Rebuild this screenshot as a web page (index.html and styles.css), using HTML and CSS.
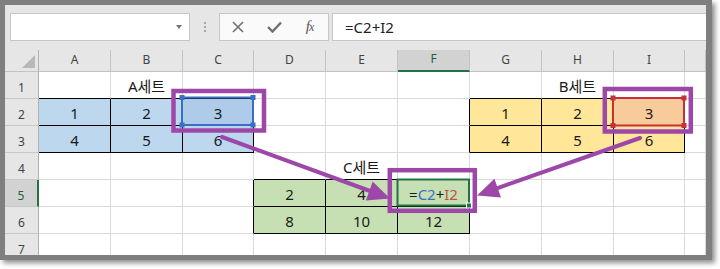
FILE: index.html
```html
<!DOCTYPE html>
<html>
<head>
    <title>Excel 셀 참조</title>
    <link rel="stylesheet" href="styles.css">
</head>
<body>
    <div class="shot">
        <div class="window">
            <div class="formula-bar">
                <div class="name-box"><span class="caret"></span></div>
                <div class="grip"><i></i><i></i><i></i></div>
                <div class="fx-buttons">
                    <span class="slot">
                        <svg width="12" height="12" viewBox="0 0 12 12"><path d="M1 1 L11 11 M11 1 L1 11" stroke="#707070" stroke-width="1.6" fill="none"/></svg>
                    </span>
                    <span class="slot">
                        <svg width="15" height="12" viewBox="0 0 15 12"><path d="M1 6 L5.5 10.5 L14 1.5" stroke="#707070" stroke-width="2.4" fill="none"/></svg>
                    </span>
                    <span class="slot fx">f<span class="fx-x">x</span></span>
                </div>
                <div class="formula-input">=C2+I2</div>
            </div>

            <div class="sheet">
                <!-- header row -->
                <div class="ch corner"><span></span></div>
                <div class="ch">A</div>
                <div class="ch">B</div>
                <div class="ch">C</div>
                <div class="ch">D</div>
                <div class="ch">E</div>
                <div class="ch sel">F</div>
                <div class="ch">G</div>
                <div class="ch">H</div>
                <div class="ch">I</div>
                <div class="ch"></div>

                <!-- row 1 -->
                <div class="rh">1</div>
                <div class="c bb"></div>
                <div class="c bb title">A세트</div>
                <div class="c bb"></div>
                <div class="c"></div>
                <div class="c"></div>
                <div class="c"></div>
                <div class="c bb"></div>
                <div class="c bb title">B세트</div>
                <div class="c bb"></div>
                <div class="c"></div>

                <!-- row 2 -->
                <div class="rh">2</div>
                <div class="c d blue">1</div>
                <div class="c d blue">2</div>
                <div class="c d blue-ref">3</div>
                <div class="c"></div>
                <div class="c"></div>
                <div class="c br"></div>
                <div class="c d yellow">1</div>
                <div class="c d yellow">2</div>
                <div class="c d orange-ref">3</div>
                <div class="c"></div>

                <!-- row 3 -->
                <div class="rh">3</div>
                <div class="c d blue">4</div>
                <div class="c d blue">5</div>
                <div class="c d blue">6</div>
                <div class="c"></div>
                <div class="c"></div>
                <div class="c br"></div>
                <div class="c d yellow">4</div>
                <div class="c d yellow">5</div>
                <div class="c d yellow">6</div>
                <div class="c"></div>

                <!-- row 4 -->
                <div class="rh">4</div>
                <div class="c"></div>
                <div class="c"></div>
                <div class="c"></div>
                <div class="c bb"></div>
                <div class="c bb title">C세트</div>
                <div class="c bb"></div>
                <div class="c"></div>
                <div class="c"></div>
                <div class="c"></div>
                <div class="c"></div>

                <!-- row 5 -->
                <div class="rh sel">5</div>
                <div class="c"></div>
                <div class="c"></div>
                <div class="c br"></div>
                <div class="c d green">2</div>
                <div class="c d green">4</div>
                <div class="c d green"><span>=<b class="ref-c">C2</b>+<b class="ref-i">I2</b></span></div>
                <div class="c"></div>
                <div class="c"></div>
                <div class="c"></div>
                <div class="c"></div>

                <!-- row 6 -->
                <div class="rh">6</div>
                <div class="c"></div>
                <div class="c"></div>
                <div class="c br"></div>
                <div class="c d green">8</div>
                <div class="c d green">10</div>
                <div class="c d green">12</div>
                <div class="c"></div>
                <div class="c"></div>
                <div class="c"></div>
                <div class="c"></div>

                <!-- row 7 -->
                <div class="rh">7</div>
                <div class="c"></div>
                <div class="c"></div>
                <div class="c"></div>
                <div class="c"></div>
                <div class="c"></div>
                <div class="c"></div>
                <div class="c"></div>
                <div class="c"></div>
                <div class="c"></div>
                <div class="c"></div>
            </div>
        </div>

        <!-- reference highlights and annotations drawn over the sheet -->
        <svg class="overlay" width="720" height="269" viewBox="0 0 720 269">
            <g fill="none" stroke-width="2">
                <rect x="182" y="97.5" width="71" height="27.5" stroke="#3b6fc6"/>
                <rect x="613" y="98" width="71" height="27.5" stroke="#c7303a"/>
                <rect x="397.5" y="179.5" width="71.5" height="26" stroke="#217346"/>
            </g>
            <g fill="#3b6fc6">
                <rect x="179.5" y="95" width="5" height="5"/>
                <rect x="250.5" y="95" width="5" height="5"/>
                <rect x="179.5" y="122.5" width="5" height="5"/>
                <rect x="250.5" y="122.5" width="5" height="5"/>
            </g>
            <g fill="#c7303a">
                <rect x="610.5" y="95.5" width="5" height="5"/>
                <rect x="681.5" y="95.5" width="5" height="5"/>
                <rect x="610.5" y="123" width="5" height="5"/>
                <rect x="681.5" y="123" width="5" height="5"/>
            </g>
            <rect x="466.5" y="203" width="5" height="5" fill="#217346" stroke="#fff" stroke-width="1"/>

            <g fill="none" stroke="#9d48a9" stroke-width="4.5">
                <rect x="173.5" y="91" width="90.5" height="39.5"/>
                <rect x="604.8" y="89" width="86" height="42.5"/>
                <rect x="389.8" y="170.2" width="85" height="40.6"/>
            </g>
            <g stroke="#9d48a9" stroke-width="4" stroke-linecap="round">
                <line x1="222" y1="137" x2="370" y2="191"/>
                <line x1="640" y1="138" x2="497" y2="188.3"/>
            </g>
            <g fill="#9d48a9">
                <polygon points="390,198.5 365.9,200.4 372.7,181.6"/>
                <polygon points="477,195.5 494.4,178.8 501,197.6"/>
            </g>
        </svg>
    </div>
</body>
</html>
```

FILE: styles.css
```css
body {
    margin: 0;
    background-color: #ffffff;
    font-family: "Noto Sans", "Noto Sans CJK KR", sans-serif;
}
.shot {
    position: relative;
    width: 720px;
    height: 269px;
    overflow: hidden;
}
.window {
    width: 701px;
    height: 250px;
    border-style: solid;
    border-color: #7f7f7f;
    border-width: 5px 6px 5px 5px;
    background-color: #e6e6e6;
    box-shadow: 3px 3px 5px rgba(0,0,0,0.45);
    overflow: hidden;
}

/* formula bar */
.formula-bar {
    height: 45px;
    box-sizing: border-box;
    padding-top: 8px;
    display: flex;
    align-items: flex-start;
}
.name-box {
    width: 180px;
    height: 28px;
    margin-left: 5px;
    box-sizing: border-box;
    background-color: #ffffff;
    border: 1px solid #c6c6c6;
    display: flex;
    align-items: center;
    justify-content: flex-end;
    padding-right: 7px;
}
.caret {
    width: 0;
    height: 0;
    border-left: 3.5px solid transparent;
    border-right: 3.5px solid transparent;
    border-top: 4px solid #777777;
}
.grip {
    width: 29px;
    height: 28px;
    display: flex;
    flex-direction: column;
    align-items: center;
    justify-content: center;
    gap: 2px;
    padding-left: 1px;
    box-sizing: border-box;
}
.grip i {
    width: 2px;
    height: 2px;
    background-color: #a6a6a6;
}
.fx-buttons {
    width: 110px;
    height: 28px;
    box-sizing: border-box;
    border: 1px solid #c6c6c6;
    background-color: #fafafa;
    display: flex;
}
.slot {
    width: 36px;
    display: flex;
    align-items: center;
    justify-content: center;
}
.fx {
    font-family: "Liberation Serif", serif;
    font-style: italic;
    font-size: 15px;
    color: #555555;
    padding-bottom: 2px;
}
.fx-x {
    font-size: 12px;
    margin-left: -1px;
    position: relative;
    top: 1px;
}
.formula-input {
    flex: 1;
    height: 28px;
    margin-left: 3px;
    box-sizing: border-box;
    border: 1px solid #c6c6c6;
    border-right: none;
    background-color: #ffffff;
    padding-left: 12px;
    font-size: 15px;
    line-height: 26px;
    color: #222222;
}

/* sheet grid */
.sheet {
    display: grid;
    grid-template-columns: 34px 72px 72px 71px 72px 72px 72px 72px 72px 71px 1fr;
    grid-template-rows: 22px repeat(7, 27px);
    background-color: #ffffff;
}
.sheet > div {
    box-sizing: border-box;
    display: flex;
    align-items: center;
    justify-content: center;
    border-right: 1px solid #d9d9d9;
    border-bottom: 1px solid #d9d9d9;
}
.sheet .ch {
    background-color: #e6e6e6;
    border-right: 1px solid #c3c3c3;
    border-bottom: 1px solid #c3c3c3;
    font-size: 12px;
    color: #444444;
    padding-bottom: 3px;
}
.sheet .ch.corner {
    justify-content: flex-end;
    align-items: flex-end;
    padding: 0 3px 3px 0;
    border-right: 1px solid #b0b0b0;
}
.corner span {
    width: 13px;
    height: 13px;
    background-color: #b8b8b8;
    clip-path: polygon(100% 0, 100% 100%, 0 100%);
}
.sheet .ch.sel {
    background-color: #d2d2d2;
    border-bottom: 2px solid #217346;
    color: #1e5e3a;
}
.sheet .rh {
    background-color: #e6e6e6;
    border-right: 1px solid #b0b0b0;
    border-bottom: 1px solid #c8c8c8;
    font-size: 12px;
    color: #444444;
    padding-top: 4px;
}
.sheet .rh.sel {
    background-color: #d2d2d2;
    border-right: 2px solid #217346;
    color: #1e5e3a;
}
.sheet .c {
    font-size: 15px;
    color: #1a1a1a;
    padding-top: 1px;
}
.sheet .bb { border-bottom-color: #000000; }
.sheet .br { border-right-color: #000000; }
.sheet .d {
    border-right-color: #000000;
    border-bottom-color: #000000;
}
.blue { background-color: #bdd7ee; }
.blue-ref { background-color: #aecbea; }
.yellow { background-color: #ffe699; }
.orange-ref { background-color: #f8cc9a; }
.green { background-color: #c6e0b4; }
.ref-c {
    font-weight: normal;
    color: #3b6fc6;
}
.ref-i {
    font-weight: normal;
    color: #c0504d;
}
.overlay {
    position: absolute;
    top: 0;
    left: 0;
    pointer-events: none;
}
```
